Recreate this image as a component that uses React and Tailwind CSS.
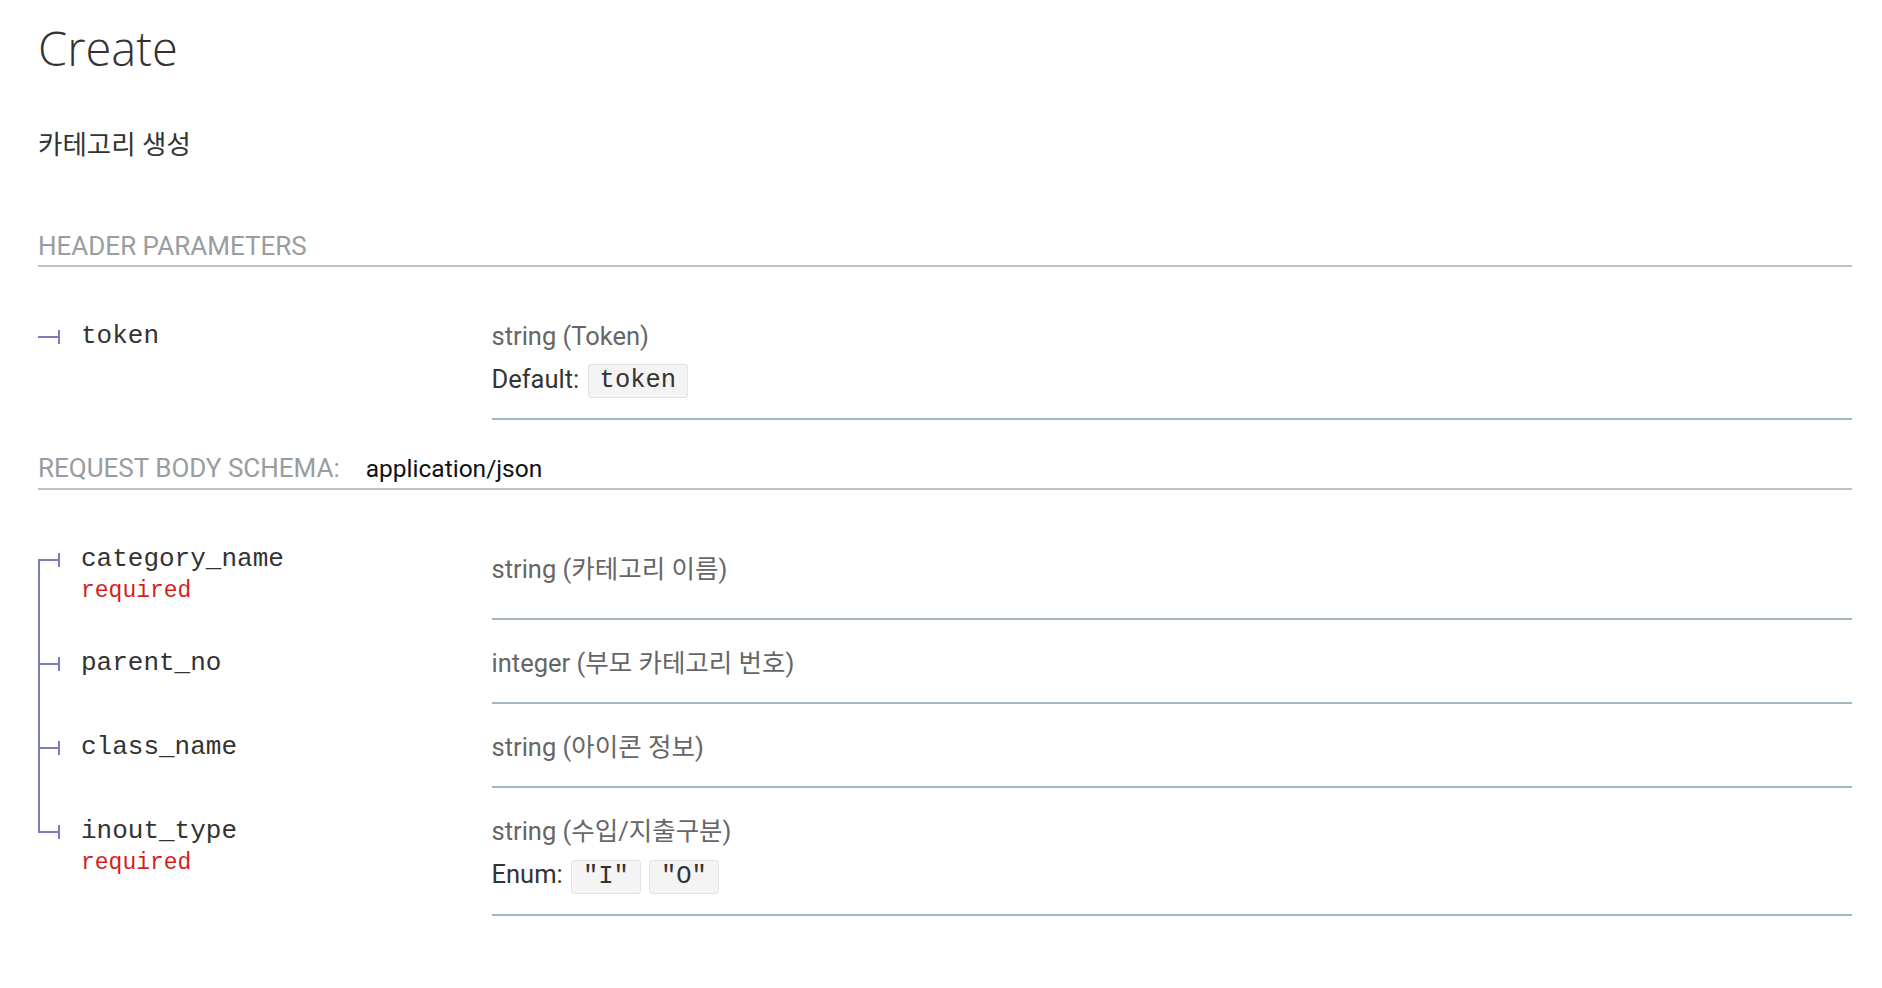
import React from 'react';

const sans = "font-['Roboto','Noto_Sans_CJK_KR',sans-serif]";
const mono = "font-['Liberation_Mono','Noto_Sans_CJK_KR',monospace]";

// tree lines left of the property name
function Marker({ pos }) {
  return (
    <>
      {pos === 'first' && <span className="absolute left-0 top-[43px] bottom-0 w-[2px] bg-[#7c7cbb]" />}
      {pos === 'middle' && <span className="absolute left-0 top-0 bottom-0 w-[2px] bg-[#7c7cbb]" />}
      {pos === 'last' && <span className="absolute left-0 top-0 h-[45px] w-[2px] bg-[#7c7cbb]" />}
      <span className="absolute left-0 top-[43px] h-[2px] w-[21px] bg-[#7c7cbb]" />
      <span className="absolute left-[20px] top-[37px] h-[14px] w-[2px] bg-[#7c7cbb]" />
    </>
  );
}

function Code({ children }) {
  return (
    <span className={`${mono} inline-block h-[34px] rounded-[3px] border border-[#e3e3e3] bg-[#f4f4f4] px-[11px] align-middle text-[25.5px] leading-[32px] text-[#333]`}>
      {children}
    </span>
  );
}

function Row({ name, required, pos, children }) {
  return (
    <div className="flex">
      <div className="relative w-1/4 shrink-0 pt-[24px] pb-[18px] pl-[43px] pr-[18px]">
        <Marker pos={pos} />
        <div className={`${mono} text-[26px] leading-[38px] text-[#333]`}>{name}</div>
        {required && <div className={`${mono} mt-[2px] text-[23px] leading-[22px] text-[#d41f1c]`}>required</div>}
      </div>
      <div className="flex w-3/4 flex-col justify-center border-b-2 border-[#a3b5bf] pt-[24px] pb-[20px]">
        {children}
      </div>
    </div>
  );
}

function Type({ children }) {
  return <div className={`${sans} text-[25.5px] leading-[38px] text-[#666]`}>{children}</div>;
}

function SectionTitle({ children, className = '' }) {
  return (
    <div className={`flex items-baseline border-b-2 border-[#bec2c5] pb-[1px] ${className}`}>
      {children}
    </div>
  );
}

export default function App() {
  return (
    <div className={`${sans} min-h-screen bg-white pl-[38px] pr-[30px]`}>
      <h2 className="pt-[22px] font-['Open_Sans',sans-serif] text-[47px] font-light leading-[52px] text-[#333]">Create</h2>

      <p className={`${sans} mt-[51px] text-[26.5px] leading-[40px] text-[#333]`}>카테고리 생성</p>

      <SectionTitle className="mt-[63px]">
        <span className="text-[26px] uppercase leading-[36px] text-[#989da1]">Header Parameters</span>
      </SectionTitle>

      <div className="mt-[26px]">
        <Row name="token" pos="single">
          <Type>string (Token)</Type>
          <div className={`${sans} mt-[5px] text-[25.5px] leading-[38px] text-[#333]`}>
            Default: <span className="ml-[2px]"><Code>token</Code></span>
          </div>
        </Row>
      </div>

      <SectionTitle className="mt-[30px]">
        <span className="text-[26px] uppercase leading-[36px] text-[#989da1]">Request Body schema:</span>
        <span className="ml-[26px] text-[24.5px] leading-[36px] text-[#111]">application/json</span>
      </SectionTitle>

      <div className="mt-[26px]">
        <Row name="category_name" required pos="first">
          <Type>string (카테고리 이름)</Type>
        </Row>
        <Row name="parent_no" pos="middle">
          <Type>integer (부모 카테고리 번호)</Type>
        </Row>
        <Row name="class_name" pos="middle">
          <Type>string (아이콘 정보)</Type>
        </Row>
        <Row name="inout_type" required pos="last">
          <Type>string (수입/지출구분)</Type>
          <div className={`${sans} mt-[5px] text-[25.5px] leading-[38px] text-[#333]`}>
            Enum: <span className="ml-[2px]"><Code>"I"</Code></span><span className="ml-[8px]"><Code>"O"</Code></span>
          </div>
        </Row>
      </div>
    </div>
  );
}
